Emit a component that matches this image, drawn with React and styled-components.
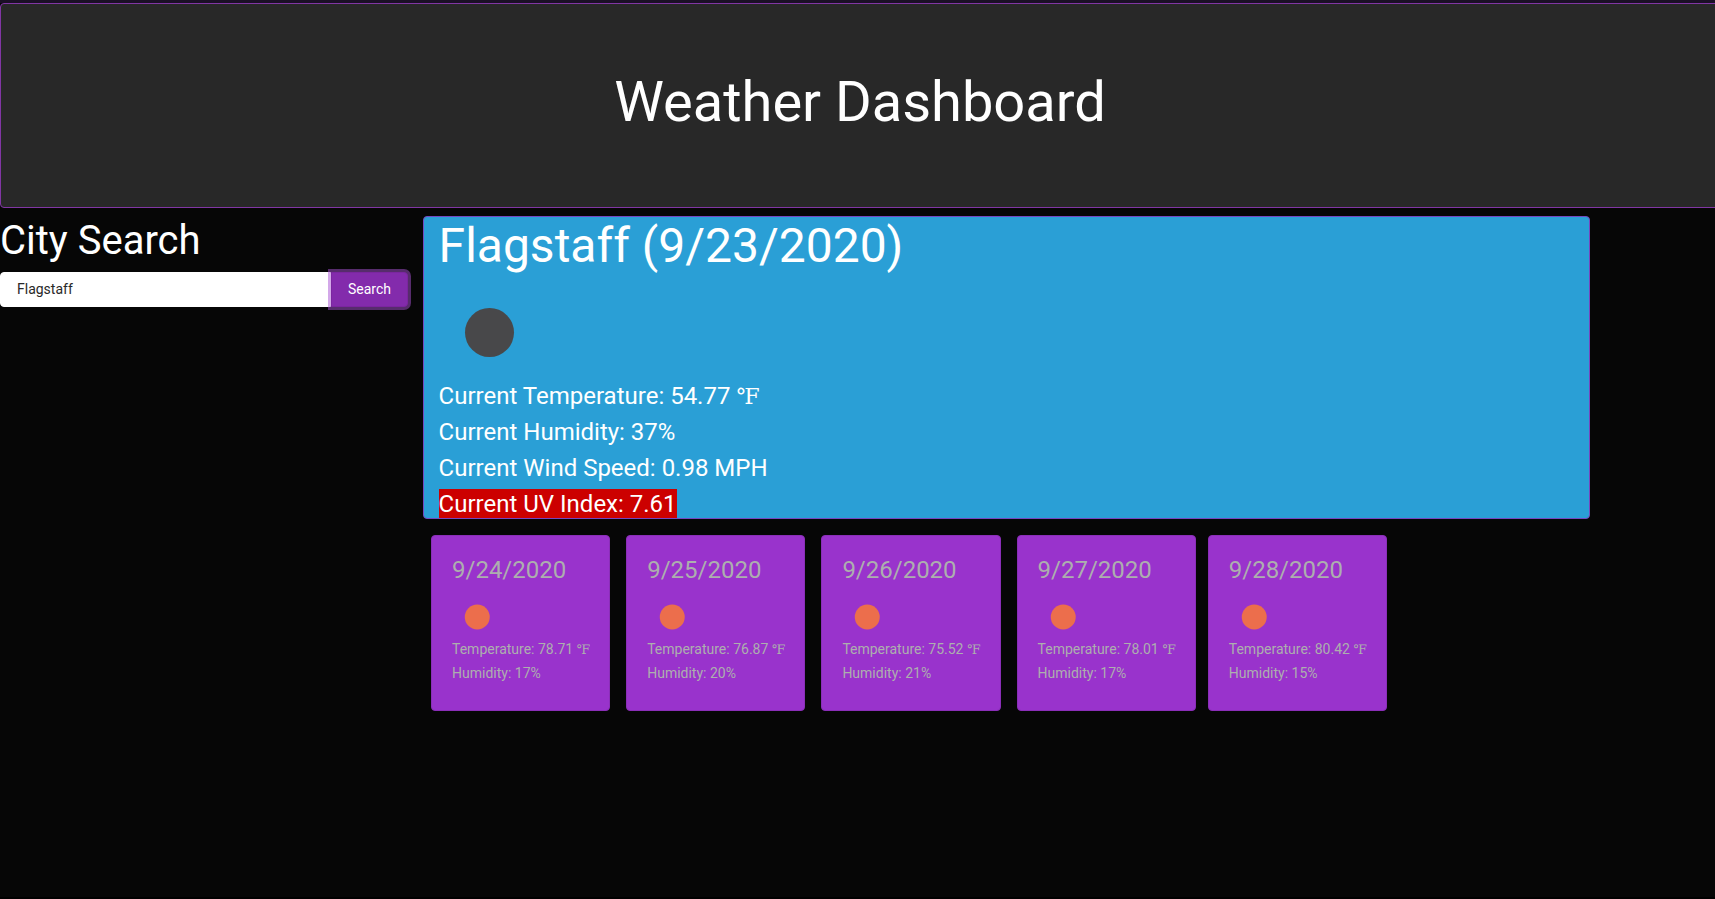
import React from "react";
import styled, { createGlobalStyle } from "styled-components";

const GlobalStyle = createGlobalStyle`
  *, *::before, *::after { box-sizing: border-box; }
  html { background: #060606; }
  body {
    margin: 0;
    overflow: hidden;
    background: #060606;
    color: #adafae;
    font-family: Roboto, "Liberation Serif", serif;
    font-size: 14px;
    line-height: 1.5;
  }
  h1, h2, h3, h4, p { margin: 0; font-weight: 400; }
`;

const Page = styled.div`
  display: flex;
  flex-direction: column;
  height: 899px;
  border-top: 3px solid #1b1026;
  border-bottom: 2px solid #000;
  overflow: hidden;
`;

const Hero = styled.header`
  flex: none;
  width: 1720px;
  height: 205px;
  padding: 65px 32px 63px;
  border: 1px solid #8136a4;
  border-radius: 4px;
  background: #282828;
  text-align: center;
`;

const Title = styled.h1`
  color: #fff;
  font-size: 56px;
  line-height: 1.2;
`;

const Content = styled.main`
  display: flex;
  gap: 15px;
  padding-top: 8px;
`;

const Sidebar = styled.aside`
  flex: none;
  width: 408px;
`;

const SidebarTitle = styled.h2`
  padding-top: 1px;
  margin-bottom: 7px;
  color: #fff;
  font-size: 40px;
  line-height: 48px;
`;

const SearchForm = styled.form`
  display: flex;
  height: 35px;
`;

const SearchInput = styled.input`
  flex: 1;
  min-width: 0;
  padding: 0 16px;
  border: 1px solid #fff;
  border-radius: 4px 0 0 4px;
  outline: none;
  background: #fff;
  color: #282828;
  font: inherit;
`;

const SearchButton = styled.button`
  position: relative;
  width: 77px;
  padding: 0;
  border: 1px solid #7b26a0;
  border-radius: 0 4px 4px 0;
  background: #832bac;
  box-shadow: 0 0 0 3px rgba(168, 82, 212, 0.5);
  color: #fff;
  font: inherit;
`;

const Forecast = styled.section`
  width: 1167px;
`;

const CurrentCard = styled.article`
  height: 303px;
  padding: 0 14.6px;
  border: 1px solid #7448c0;
  border-radius: 4px;
  background: #2a9fd6;
  color: #fff;
`;

const CityName = styled.h2`
  font-size: 48px;
  line-height: 57.6px;
`;

const Icon = styled.svg`
  display: block;
  width: ${(p) => p.$size}px;
  height: ${(p) => p.$size}px;
  margin: 7px 0 ${(p) => p.$gap}px;
`;

const Reading = styled.p`
  font-size: 24px;
  line-height: 36px;
`;

const Unit = styled.span`
  display: inline-block;
  width: 0.85em;
  font-family: "DejaVu Serif", serif;
  font-size: 0.92em;
  line-height: 1;
`;

const UvBadge = styled.span`
  padding-top: 1px;
  background: #c00;
`;

const Days = styled.div`
  display: flex;
  gap: 16px;
  padding: 16px 8px 0;
`;

const DayCard = styled.article`
  flex: none;
  width: 179.2px;
  height: 176px;
  padding: 20px;
  border: 1px solid #8a2eb8;
  border-radius: 4px;
  background: #9933cc;
  white-space: nowrap;

  &:last-child { margin-left: -4px; }
`;

const DayDate = styled.h4`
  font-size: 24px;
  line-height: 28.8px;
`;

const DayReading = styled.p`
  line-height: 24px;
`;

const days = [
  { date: "9/24/2020", temp: "78.71", humidity: 17 },
  { date: "9/25/2020", temp: "76.87", humidity: 20 },
  { date: "9/26/2020", temp: "75.52", humidity: 21 },
  { date: "9/27/2020", temp: "78.01", humidity: 17 },
  { date: "9/28/2020", temp: "80.42", humidity: 15 },
];

function SkyIcon({ size, color, radius, gap, cy = 50 }) {
  return (
    <Icon $size={size} $gap={gap} viewBox="0 0 100 100" aria-hidden="true">
      <circle cx="50.5" cy={cy} r={radius} fill={color} />
    </Icon>
  );
}

export default function App() {
  return (
    <>
      <GlobalStyle />
      <Page>
        <Hero>
          <Title>Weather Dashboard</Title>
        </Hero>
        <Content>
          <Sidebar>
            <SidebarTitle>City Search</SidebarTitle>
            <SearchForm onSubmit={(e) => e.preventDefault()}>
              <SearchInput defaultValue="Flagstaff" aria-label="City" />
              <SearchButton>Search</SearchButton>
            </SearchForm>
          </Sidebar>
          <Forecast>
            <CurrentCard>
              <CityName>Flagstaff (9/23/2020)</CityName>
              <SkyIcon size={100} color="#48484a" radius={24.5} gap={-4} cy={50.5} />
              <Reading>
                Current Temperature: 54.77 <Unit>℉</Unit>
              </Reading>
              <Reading>Current Humidity: 37%</Reading>
              <Reading>Current Wind Speed: 0.98 MPH</Reading>
              <Reading>
                <UvBadge>Current UV Index: 7.61</UvBadge>
              </Reading>
            </CurrentCard>
            <Days>
              {days.map((day) => (
                <DayCard key={day.date}>
                  <DayDate>{day.date}</DayDate>
                  <SkyIcon size={50} color="#ec6e4c" radius={25} gap={-5} />
                  <DayReading>
                    Temperature: {day.temp} <Unit>℉</Unit>
                  </DayReading>
                  <DayReading>Humidity: {day.humidity}%</DayReading>
                </DayCard>
              ))}
            </Days>
          </Forecast>
        </Content>
      </Page>
    </>
  );
}
